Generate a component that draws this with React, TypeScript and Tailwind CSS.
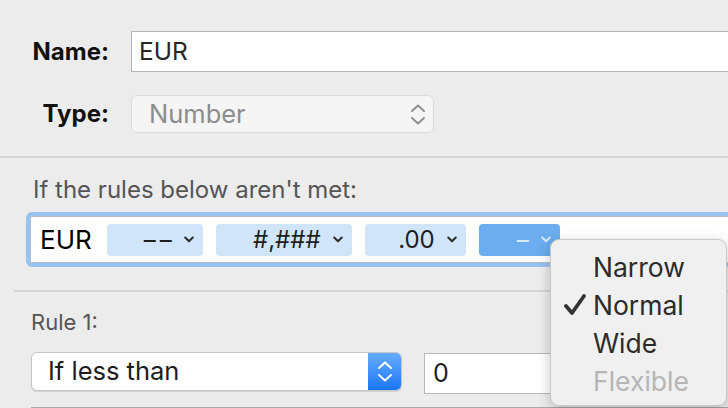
import React from 'react'

function Caret({ className }: { className?: string }) {
  return (
    <svg width="10" height="7" viewBox="0 0 10 7" className={className}>
      <polyline points="1.2,1.5 5,5.2 8.8,1.5" fill="none" stroke="currentColor" strokeWidth="2" strokeLinecap="round" strokeLinejoin="round" />
    </svg>
  )
}

function UpDown({ className }: { className?: string }) {
  return (
    <svg width="16" height="23" viewBox="0 0 16 23" className={className}>
      <polyline points="2,8 8,2.5 14,8" fill="none" stroke="currentColor" strokeWidth="2" strokeLinecap="round" strokeLinejoin="round" />
      <polyline points="2,15 8,20.5 14,15" fill="none" stroke="currentColor" strokeWidth="2" strokeLinecap="round" strokeLinejoin="round" />
    </svg>
  )
}

function Token({ label, width, dark }: { label: React.ReactNode; width: string; dark?: boolean }) {
  return (
    <div
      className={`${width} shrink-0 h-[32px] rounded-[4px] flex items-center justify-end pr-[9px] gap-[12px] text-[24px] ${
        dark ? 'bg-[#6badee] text-[#d9eafb]' : 'bg-[#d1e5fa] text-[#1e1e1e]'
      }`}
    >
      <span className="leading-none">{label}</span>
      <Caret className={dark ? 'text-[#d9eafb]' : 'text-[#2a2a2a]'} />
    </div>
  )
}

const widths = [
  { label: 'Narrow' },
  { label: 'Normal', checked: true },
  { label: 'Wide' },
  { label: 'Flexible', disabled: true },
]

export default function App() {
  return (
    <div className="relative w-[728px] h-[408px] overflow-hidden bg-[#ececec] font-['Inter','Liberation_Sans',sans-serif] pt-[31px]">
      {/* name / type */}
      <div className="flex items-center h-[41px]">
        <div className="w-[109px] shrink-0 text-right text-[24px] font-bold text-[#111] leading-none">Name:</div>
        <div className="ml-[22px] w-[640px] shrink-0 h-full bg-white border border-[#b4b4b4] flex items-center pl-[7px] text-[24.5px] text-[#262626]">
          EUR
        </div>
      </div>
      <div className="flex items-center h-[38px] mt-[23px]">
        <div className="w-[109px] shrink-0 text-right text-[24px] font-bold text-[#111] leading-none">Type:</div>
        <div className="ml-[22px] w-[303px] shrink-0 h-full rounded-[6px] bg-[#f5f5f5] border border-[#dcdcdc] flex items-center justify-between pl-[17px] pr-[7px] text-[25.5px] text-[#8c8c8c]">
          <span>Number</span>
          <UpDown className="text-[#8f8f8f]" />
        </div>
      </div>
      <div className="mt-[23px] h-[2px] bg-[#d5d5d5]" />

      {/* fallback format */}
      <div className="mt-[21px] pl-[33px] h-[22px] flex items-center text-[24px] leading-none text-[#555]">
        If the rules below aren't met:
      </div>
      <div className="mt-[11px] ml-[26px] w-[720px] rounded-[6px] bg-[#98c2f0] p-[4px]">
        <div className="h-[47px] bg-white border border-[#b3bcc6] flex items-center gap-[13px] pl-[9px]">
          <span className="text-[26px] text-black leading-none mr-[2px]">EUR</span>
          <Token
            label={
              <span className="flex gap-[4px]">
                <span>–</span>
                <span>–</span>
              </span>
            }
            width="w-[96px]"
          />
          <Token label="#,###" width="w-[136px]" />
          <Token label=".00" width="w-[101px]" />
          <Token label="–" width="w-[81px]" dark />
        </div>
      </div>
      <div className="mt-[23px] ml-[14px] h-[2px] bg-[#d5d5d5]" />

      {/* rule 1 */}
      <div className="mt-[19px] pl-[31px] h-[22px] flex items-center text-[22px] leading-none text-[#555]">Rule 1:</div>
      <div className="mt-[19px] pl-[31px] flex items-start gap-[22px]">
        <div className="w-[371px] shrink-0 h-[39px] rounded-[6px] bg-white border border-[#c6c6c6] shadow-[0_1px_1px_rgba(0,0,0,0.12)] flex items-stretch overflow-hidden">
          <div className="flex-1 flex items-center pl-[16px] text-[25.5px] text-[#1e1e1e]">If less than</div>
          <div className="w-[33px] bg-gradient-to-b from-[#66acfc] to-[#1676f6] flex items-center justify-center">
            <UpDown className="text-white" />
          </div>
        </div>
        <div className="mt-[1px] w-[300px] shrink-0 h-[41px] bg-white border border-[#b8b8b8] flex items-center pl-[8px] text-[25px] text-[#1e1e1e]">
          0
        </div>
      </div>
      <div className="mt-[13px] ml-[31px] border-t border-[#a9a9a9]" />

      {/* popup menu */}
      <div className="absolute left-[550px] top-[239px] w-[177px] h-[167px] rounded-[9px] bg-[#f0f0f0] border border-[#c9c9c9] shadow-[0_4px_14px_rgba(0,0,0,0.22)] pt-[8px]">
        {widths.map((w) => (
          <div key={w.label} className="relative h-[38px] flex items-center pl-[42px] text-[26.5px] leading-none">
            {w.checked && (
              <svg width="24" height="22" viewBox="0 0 24 22" className="absolute left-[12px] top-[8px] text-[#333]">
                <polyline points="3,12 9,19 21,2" fill="none" stroke="currentColor" strokeWidth="3.8" strokeLinecap="round" strokeLinejoin="round" />
              </svg>
            )}
            <span className={w.disabled ? 'text-[#b5b5b5]' : 'text-[#2b2b2b]'}>{w.label}</span>
          </div>
        ))}
      </div>
    </div>
  )
}
